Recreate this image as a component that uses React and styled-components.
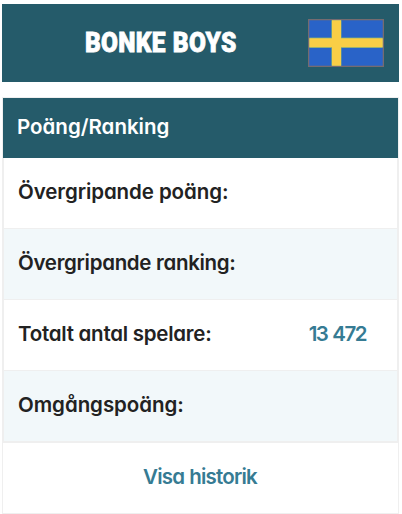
import React from "react";
import styled, { createGlobalStyle } from "styled-components";

const GlobalStyle = createGlobalStyle`
  * { box-sizing: border-box; }
  body {
    margin: 0;
    background: #fff;
    font-family: Inter, "Open Sans", sans-serif;
    font-feature-settings: "cv11";
    font-size: 20.5px;
    font-weight: 500;
    color: #222;
  }
`;

const Page = styled.main`
  width: 402px;
  height: 514px;
  padding: 4px 3px 0 2px;
  overflow: hidden;
`;

const TeamBar = styled.header`
  display: flex;
  align-items: center;
  height: 78px;
  margin-bottom: 15px;
  padding: 0 15px 0 83px;
  background: #255b6a;
`;

const TeamName = styled.h1`
  flex: 1;
  margin: 0;
  font-family: Roboto, sans-serif;
  font-size: 28px;
  line-height: 34px;
  font-weight: 900;
  letter-spacing: 0.3px;
  word-spacing: 1px;
  white-space: nowrap;
  color: #fff;
  -webkit-text-stroke: 0.8px #fff;
  transform: scaleX(0.875);
  transform-origin: left center;
`;

const Flag = styled.svg`
  flex: none;
  display: block;
  width: 76px;
  height: 48px;
`;

const Card = styled.section`
  height: 417px;
  border: 1px solid #efefef;
`;

const CardTitle = styled.h2`
  display: flex;
  align-items: center;
  height: 60px;
  margin: 0;
  padding: 0 0 3px 14px;
  background: #255b6a;
  color: #fff;
  font-size: inherit;
  font-weight: 600;
  letter-spacing: 0;
`;

const Stats = styled.dl`
  margin: 0;
  border: solid #efefef;
  border-width: 0 1px 1px;
`;

const Row = styled.div`
  display: flex;
  align-items: center;
  justify-content: space-between;
  height: 71px;
  padding: 0 31px 4px 14px;
  border-bottom: 1px solid #efefef;
  background: #fff;
  &:nth-child(even) { background: #f2f8fa; }
`;

const Label = styled.dt`
  font-weight: 600;
  white-space: nowrap;
  letter-spacing: ${(p) => p.$tracking}px;
`;

const Value = styled.dd`
  margin: 0;
  font-weight: 600;
  white-space: nowrap;
  letter-spacing: -1.5px;
  word-spacing: 1.2px;
  color: #367b93;
`;

const HistoryLink = styled.a`
  display: flex;
  align-items: center;
  justify-content: center;
  height: 70px;
  padding: 0 1px 4px 0;
  font-weight: 600;
  letter-spacing: -0.8px;
  word-spacing: 0.6px;
  color: #367b93;
`;

const rows = [
  { label: "Övergripande poäng:", tracking: -0.08 },
  { label: "Övergripande ranking:", tracking: -0.3 },
  { label: "Totalt antal spelare:", value: "13 472", tracking: -0.25 },
  { label: "Omgångspoäng:", tracking: -0.05 },
];

const SwedishFlag = () => (
  <Flag viewBox="0 0 76 48" role="img" aria-label="Sverige">
    <rect width="76" height="48" fill="#756b70" />
    <rect x="1.3" y="1.3" width="73.4" height="45.4" fill="#2963c8" />
    <path d="M23.2 1.3h10.4v45.4H23.2z M1.3 18.6h73.4v10.4H1.3z" fill="#73a587" />
    <path d="M24 1.3h9v45.4h-9z M1.3 19.3h73.4v9H1.3z" fill="#f9ce46" />
  </Flag>
);

export default function App() {
  return (
    <>
      <GlobalStyle />
      <Page>
        <TeamBar>
          <TeamName>BONKE BOYS</TeamName>
          <SwedishFlag />
        </TeamBar>
        <Card>
          <CardTitle>Poäng/Ranking</CardTitle>
          <Stats>
            {rows.map((row) => (
              <Row key={row.label}>
                <Label $tracking={row.tracking}>{row.label}</Label>
                {row.value && <Value>{row.value}</Value>}
              </Row>
            ))}
          </Stats>
          <HistoryLink>Visa historik</HistoryLink>
        </Card>
      </Page>
    </>
  );
}
